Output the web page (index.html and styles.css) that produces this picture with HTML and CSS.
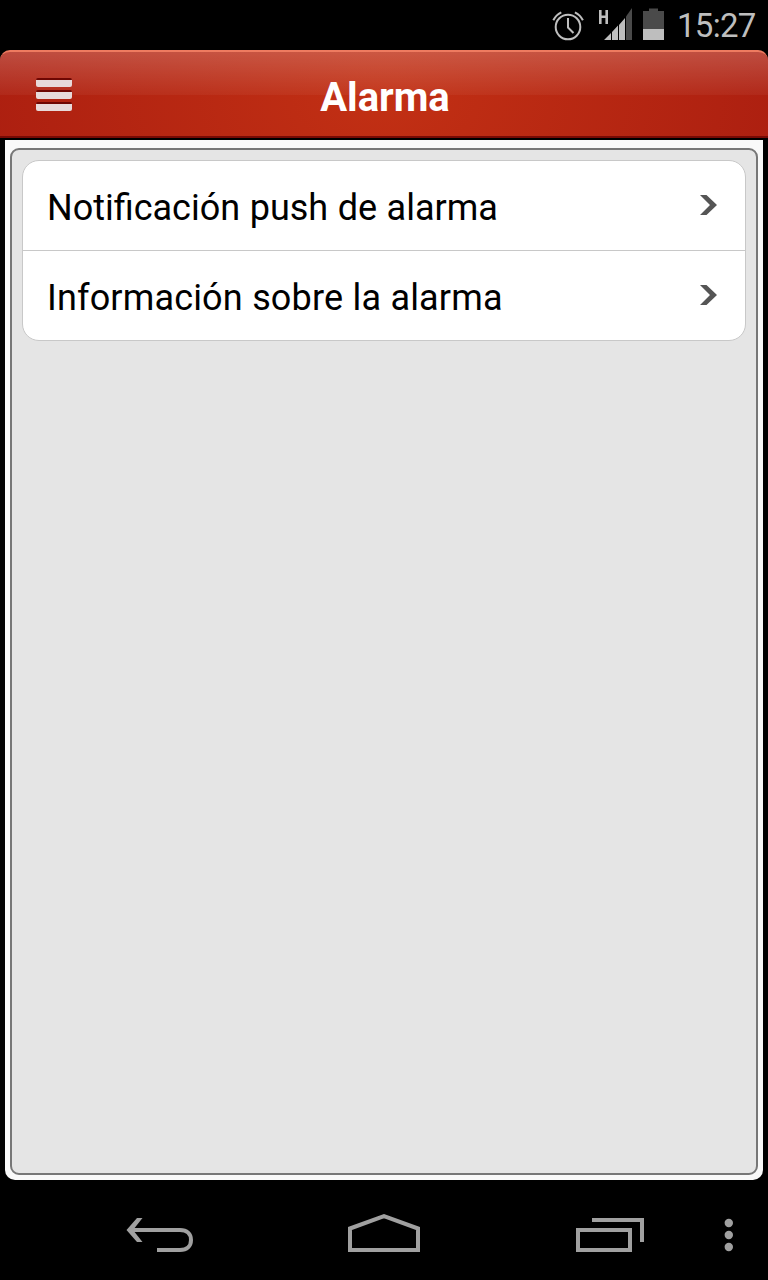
FILE: index.html
```html
<!DOCTYPE html>
<html lang="es">
<head>
    <meta charset="UTF-8">
    <meta name="viewport" content="width=device-width, initial-scale=1.0">
    <title>Alarma</title>
    <link rel="stylesheet" href="styles.css">
</head>
<body>
    <!-- Barra de estado -->
    <div class="status-bar">
        <svg class="status-icons" width="116" height="50" viewBox="550 0 116 50">
            <g fill="none" stroke="#bebebe" stroke-width="2">
                <circle cx="568" cy="27" r="12.3"/>
                <path d="M568 18v9.5l5.5 5.5"/>
                <path d="M553.3 20.3a17 17 0 0 1 8-8M582.9 20.3a17 17 0 0 0-8-8"/>
            </g>
            <path d="M599 10h2.6v5.6h3.8V10h2.6v14h-2.6v-6h-3.8v6H599z" fill="#bebebe"/>
            <path d="M604 40l7-7V40zM612 32l6-6.500V40h-6zM619 25l6-7V40h-6z" fill="#bebebe"/>
            <path d="M626 16.500l6-8.500V40h-6z" fill="#4a4a4a"/>
            <path d="M649 8.500h9V11h6v18h-21V11h6z" fill="#4a4a4a"/>
            <path d="M643 29h21v11h-21z" fill="#bebebe"/>
        </svg>
        <span class="clock">15:27</span>
    </div>

    <header class="header">
        <button class="menu-button" aria-label="Menú">
            <span class="line"></span>
            <span class="line"></span>
            <span class="line"></span>
        </button>
        <h1 class="title">Alarma</h1>
    </header>

    <main class="panel">
        <div class="content">
            <ul class="list">
                <li class="item">
                    <span>Notificación push de alarma</span>
                    <svg class="arrow" width="17" height="20" viewBox="0 0 17 20"><path d="M0 0h6.500l10.500 10L6.500 20H0l10-10z" fill="#555"/></svg>
                </li>
                <li class="item">
                    <span>Información sobre la alarma</span>
                    <svg class="arrow" width="17" height="20" viewBox="0 0 17 20"><path d="M0 0h6.500l10.500 10L6.500 20H0l10-10z" fill="#555"/></svg>
                </li>
            </ul>
        </div>
    </main>

    <!-- Botones de navegación -->
    <nav class="nav-bar">
        <svg width="768" height="100" viewBox="0 1180 768 100">
            <g fill="none" stroke="#a0a0a0" stroke-width="4">
                <path d="M130 1230h50c7 0 11 4 11 10s-4 10-11 10h-23"/>
                <path d="M350 1228.500l34-12.300 34 12.300V1250h-68z"/>
                <path d="M578 1230h52v20h-52z"/>
                <path d="M592 1220h50v22"/>
            </g>
            <g fill="#a0a0a0">
                <path d="M137 1218h5.500l-9.500 12 9.500 12H137l-10.500-12z"/>
                <circle cx="728.800" cy="1223" r="4.200"/>
                <circle cx="728.800" cy="1235" r="4.200"/>
                <circle cx="728.800" cy="1247" r="4.200"/>
            </g>
        </svg>
    </nav>
</body>
</html>
```

FILE: styles.css
```css
* {
    box-sizing: border-box;
}
body {
    margin: 0;
    height: 1280px;
    display: flex;
    flex-direction: column;
    background-color: #000;
    font-family: Roboto, "Liberation Sans", sans-serif;
    overflow: hidden;
}
.status-bar {
    height: 50px;
    display: flex;
    justify-content: flex-end;
    align-items: center;
    padding-right: 12px;
    color: #bebebe;
}
.clock {
    width: 79px;
    margin-left: 11px;
    padding-top: 1px;
    font-size: 33px;
    line-height: 48px;
    letter-spacing: -0.7px;
    white-space: nowrap;
}
.header {
    height: 88px;
    display: grid;
    grid-template-columns: 108px 1fr 106px;
    align-items: center;
    border-top: 2px solid #ee7b60;
    border-bottom: 2px solid #780a05;
    border-radius: 10px 10px 0 0;
    background:
        linear-gradient(rgba(255, 255, 255, 0.2), rgba(255, 255, 255, 0.04)) 0 0 / 100% 43px no-repeat,
        radial-gradient(ellipse 430px 300px at 50% 50%, #c23014, #ab1e10);
}
.menu-button {
    display: flex;
    flex-direction: column;
    width: 36px;
    margin: 4px 0 0 36px;
    padding: 0;
    border: none;
    background: none;
}
.line {
    height: 9px;
    margin-bottom: 3px;
    border-top: 2px solid #6e0703;
    border-radius: 2px;
    background-color: #e7dada;
}
.title {
    margin: 8px 0 0;
    color: #fff;
    font-size: 40px;
    font-weight: bold;
    line-height: 48px;
    text-align: center;
}
.panel {
    height: 1040px;
    margin: 2px 5px 0 5px;
    padding: 8px 5px 5px;
    border-radius: 0 0 10px 10px;
    background-color: #f9f9f9;
}
.content {
    height: 1027px;
    padding: 10px;
    border: 2px solid #777;
    border-radius: 9px;
    background-color: #e5e5e5;
}
.list {
    margin: 0;
    padding: 0;
    list-style: none;
    border: 1px solid #c8c8c8;
    border-radius: 17px;
    background-color: #fff;
}
.item {
    height: 89px;
    display: flex;
    justify-content: space-between;
    align-items: center;
    padding: 5px 28px 0 24px;
    color: #000;
    font-size: 36px;
    line-height: 42px;
    word-spacing: 0.6px;
}
.item + .item {
    height: 90px;
    border-top: 1px solid #c8c8c8;
    letter-spacing: 0.16px;
    word-spacing: 0.2px;
}
.arrow {
    margin-top: -6px;
}
.nav-bar {
    height: 100px;
}
.nav-bar svg {
    display: block;
}
```
